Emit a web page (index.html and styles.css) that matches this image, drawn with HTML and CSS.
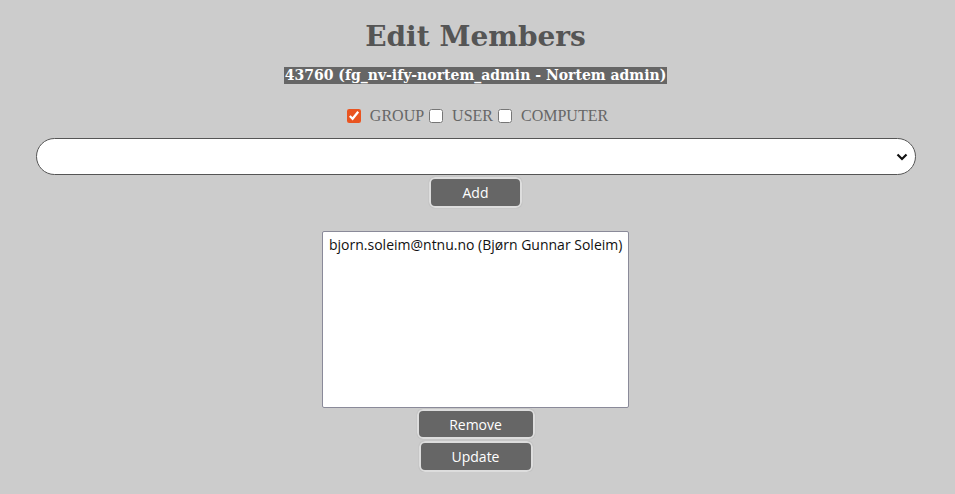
FILE: index.html
```html
<!DOCTYPE html>
<html>
<head>
<meta charset="utf-8">
<link rel="stylesheet" href="styles.css">
</head>
<body>
<main class="page">
  <h1 class="title">Edit Members</h1>
  <div class="subtitle"><span class="subtitle-text">43760 (fg_nv-ify-nortem_admin - Nortem admin)</span></div>
  <div class="types">
    <label class="type"><input type="checkbox" checked> GROUP</label>
    <label class="type"><input type="checkbox"> USER</label>
    <label class="type"><input type="checkbox"> COMPUTER</label>
  </div>
  <div class="picker">
    <div class="select">
      <svg class="chev" width="12" height="8" viewBox="0 0 12 8"><path d="M1.5 1.5 L6 6 L10.5 1.5" fill="none" stroke="#111" stroke-width="2.2"/></svg>
    </div>
  </div>
  <button class="btn btn-add">Add</button>
  <div class="members">
    <div class="member">bjorn.soleim@ntnu.no (Bjørn Gunnar Soleim)</div>
  </div>
  <button class="btn btn-remove">Remove</button>
  <button class="btn btn-update">Update</button>
</main>
</body>
</html>
```

FILE: styles.css
```css
html, body {
  margin: 0;
  padding: 0;
  background: #cccccc;
}
.page {
  display: flex;
  flex-direction: column;
  align-items: center;
  width: 951px;
  font-family: "Open Sans", "Noto Sans", sans-serif;
}
.title {
  margin: 18px 0 0 0;
  font-family: "DejaVu Serif", serif;
  font-weight: bold;
  font-size: 28px;
  line-height: 38px;
  color: #555555;
}
.subtitle {
  margin-top: 10px;
  line-height: 17px;
  height: 17px;
}
.subtitle-text {
  font-family: "DejaVu Serif", serif;
  font-weight: bold;
  font-size: 14px;
  color: #ffffff;
  background: #666666;
  display: inline-block;
  padding: 0 1px;
}
.types {
  margin-top: 24px;
  padding-left: 4px;
  display: flex;
  align-items: center;
  font-family: "Liberation Serif", serif;
  font-size: 16px;
  color: #666666;
}
.type {
  display: flex;
  align-items: center;
  margin-right: 5px;
}
.type:last-child {
  margin-right: 0;
}
.type input {
  width: 14px;
  height: 14px;
  margin: 0 9px 0 0;
  accent-color: #e95420;
}
.picker {
  margin-top: 13px;
  width: 880px;
}
.select {
  box-sizing: border-box;
  height: 37px;
  border: 1px solid #555555;
  border-radius: 19px;
  background: #ffffff;
  display: flex;
  align-items: center;
  justify-content: flex-end;
  padding-right: 7px;
}
.btn {
  box-sizing: border-box;
  background: #666666;
  color: #ffffff;
  font-family: "Open Sans", "Noto Sans", sans-serif;
  font-size: 14px;
  border: 2px solid #dddddd;
  border-radius: 6px;
  box-shadow: 0 0 1px #999;
  padding: 0;
  flex-shrink: 0;
}
.btn-add {
  margin-top: 2px;
  width: 93px;
  height: 31px;
}
.members {
  box-sizing: border-box;
  margin-top: 23px;
  width: 307px;
  height: 177px;
  background: #ffffff;
  border: 1px solid #8a8a99;
  border-radius: 2px;
  padding: 2px 6px;
  font-size: 14px;
  color: #111111;
  flex-shrink: 0;
}
.member {
  line-height: 22px;
  white-space: nowrap;
}
.btn-remove {
  margin-top: 1px;
  width: 118px;
  height: 30px;
}
.btn-update {
  margin-top: 2px;
  width: 114px;
  height: 31px;
}
```
